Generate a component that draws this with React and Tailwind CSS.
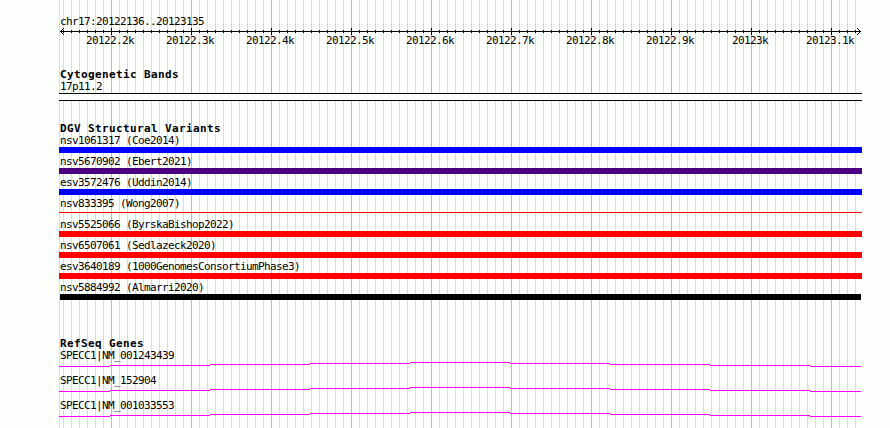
const LEFT = 59
const HEIGHT = 428

const MINOR_LINES = [LEFT, ...Array.from({ length: 100 }, (_, i) => 63 + i * 8)]
const isMajor = (x) => (x - 111) % 80 === 0

const SCALE_LABELS = [
  '20122.2k', '20122.3k', '20122.4k', '20122.5k', '20122.6k',
  '20122.7k', '20122.8k', '20122.9k', '20123k', '20123.1k',
]

const VARIANTS = [
  { name: 'nsv1061317 (Coe2014)', bar: 'h-1.5 bg-[#0000ff]' },
  { name: 'nsv5670902 (Ebert2021)', bar: 'h-1.5 bg-[#4b0082]' },
  { name: 'esv3572476 (Uddin2014)', bar: 'h-1.5 bg-[#0000ff]' },
  { name: 'nsv833395 (Wong2007)', bar: 'mt-0.5 h-px bg-[#ff0000]' },
  { name: 'nsv5525066 (ByrskaBishop2022)', bar: 'h-1.5 bg-[#ff0000]' },
  { name: 'nsv6507061 (Sedlazeck2020)', bar: 'h-1.5 bg-[#ff0000]' },
  { name: 'esv3640189 (1000GenomesConsortiumPhase3)', bar: 'h-1.5 bg-[#ff0000]' },
  { name: 'nsv5884992 (Almarri2020)', bar: 'ml-px mr-px h-1.5 bg-black' },
]

const GENES = ['SPECC1|NM_001243439', 'SPECC1|NM_152904', 'SPECC1|NM_001033553']

// [start, end, y] of each intron step, relative to the track
const INTRON_STEPS = [
  [0, 51, 5], [51, 151, 4], [151, 251, 3], [251, 351, 2], [351, 451, 1],
  [451, 551, 2], [551, 651, 3], [651, 751, 4], [751, 802, 5],
]

function GridLines() {
  return (
    <svg className="absolute inset-0" width="890" height={HEIGHT} shapeRendering="crispEdges">
      {MINOR_LINES.map((x) => (
        <rect key={x} x={x} y="0" width="1" height={HEIGHT} fill={isMajor(x) ? '#87ceeb' : '#afeeee'} />
      ))}
    </svg>
  )
}

function Ruler() {
  return (
    <svg className="block mt-px" width="803" height="20">
      <g shapeRendering="crispEdges">
        <rect x="1" y="3" width="801" height="1" />
        {MINOR_LINES.slice(1).map((x) =>
          isMajor(x) ? (
            <rect key={x} x={x - LEFT} y="0" width="1" height="7" />
          ) : (
            <rect key={x} x={x - LEFT} y="2" width="1" height="3" />
          ),
        )}
        {[1, 2, 3].map((d) => (
          <g key={d}>
            <rect x={1 + d} y={3 - d} width="1" height="1" />
            <rect x={1 + d} y={3 + d} width="1" height="1" />
            <rect x={801 - d} y={3 - d} width="1" height="1" />
            <rect x={801 - d} y={3 + d} width="1" height="1" />
          </g>
        ))}
      </g>
      {SCALE_LABELS.map((label, i) => (
        <text key={label} x={52 + i * 80 - (label.length * 6) / 2 - 1} y="16">
          {label}
        </text>
      ))}
    </svg>
  )
}

function Title({ children }) {
  return (
    <h2 className="h-3 pl-px text-[11px] leading-[14px] font-bold tracking-[0.378px] whitespace-pre">{children}</h2>
  )
}

function Label({ children }) {
  return <div className="h-3 pl-px leading-[14px] whitespace-pre">{children}</div>
}

function Variant({ name, bar }) {
  return (
    <div className="h-[21px]">
      <Label>{name}</Label>
      <div className="pt-px">
        <div className={bar} />
      </div>
    </div>
  )
}

function Gene({ name }) {
  return (
    <div className="h-[25px]">
      <Label>{name}</Label>
      <svg className="block" width="803" height="6" shapeRendering="crispEdges">
        {INTRON_STEPS.map(([from, to, y]) => (
          <rect key={from} x={from} y={y} width={to - from} height="1" fill="#ff00ff" />
        ))}
      </svg>
    </div>
  )
}

export default function App() {
  return (
    <div className="relative w-[890px] h-[428px] overflow-hidden bg-[#fdfffc] text-black font-['DejaVu_Sans_Mono',monospace] text-[11px] leading-3 tracking-[-0.622px]">
      <GridLines />
      <main className="relative ml-[59px] w-[803px] pt-[15px]">
        <header>
          <Label>chr17:20122136..20123135</Label>
          <Ruler />
        </header>

        <section className="mt-5">
          <Title>Cytogenetic Bands</Title>
          <Label>17p11.2</Label>
          <div className="mt-px h-2 border-y border-black bg-[#fdfffc]" />
        </section>

        <section className="mt-[21px]">
          <Title>DGV Structural Variants</Title>
          {VARIANTS.map((v) => (
            <Variant key={v.name} {...v} />
          ))}
        </section>

        <section className="mt-[35px]">
          <Title>RefSeq Genes</Title>
          {GENES.map((name) => (
            <Gene key={name} name={name} />
          ))}
        </section>
      </main>
    </div>
  )
}
